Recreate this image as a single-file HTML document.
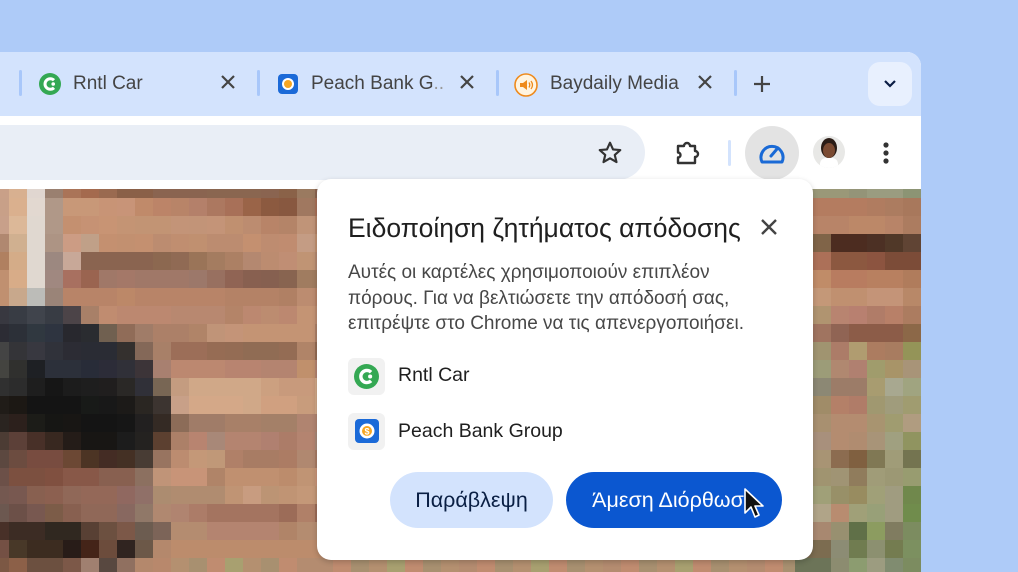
<!DOCTYPE html>
<html><head><meta charset="utf-8">
<style>
*{margin:0;padding:0;box-sizing:border-box}
body{width:1018px;height:572px;overflow:hidden;background:#aecbf8;font-family:"Liberation Sans","DejaVu Sans",sans-serif;position:relative}
.abs{position:absolute}
#win{position:absolute;left:0;top:52px;width:921px;height:520px;background:#fff;border-top-right-radius:14px;overflow:hidden}
#tabs{position:absolute;left:0;top:0;width:921px;height:64px;background:#d3e3fd}
.sep{position:absolute;width:3px;height:26px;top:18px;background:#a8c7fa;border-radius:2px}
.tt{position:absolute;top:20px;font-size:19px;color:#444;line-height:24px}
.x{position:absolute;top:23px}
#bg{position:absolute;left:0;top:137px;width:921px;height:383px;overflow:hidden}
</style></head><body>
<div id="win">
 <div id="bg"></div>
 <div id="tabs">
  <div class="sep" style="left:19px"></div>
  <svg class="abs" style="left:39px;top:21px" width="22" height="22" viewBox="0 0 22 22"><circle cx="11" cy="11" r="11" fill="#34a853"/><path d="M15 7.2A5.3 5.3 0 1 0 15 14.8" stroke="#fff" stroke-width="3" fill="none"/><circle cx="14.2" cy="11" r="1.8" fill="#fff"/></svg>
  <div class="tt" style="left:73px">Rntl Car</div>
  <svg class="x" style="left:221px" width="14" height="14"><path d="M1 1L13 13M13 1L1 13" stroke="#444" stroke-width="2.2"/></svg>
  <div class="sep" style="left:257px"></div>
  <svg class="abs" style="left:278px;top:22px" width="20" height="20"><rect width="20" height="20" rx="4" fill="#1b6ad8"/><circle cx="10" cy="10" r="6" fill="#fff"/><circle cx="10" cy="10" r="4" fill="#f6a623"/></svg>
  <div class="tt" style="left:311px">Peach Bank G<span style="color:#999">..</span></div>
  <svg class="x" style="left:460px" width="14" height="14"><path d="M1 1L13 13M13 1L1 13" stroke="#444" stroke-width="2.2"/></svg>
  <div class="sep" style="left:496px"></div>
  <svg class="abs" style="left:514px;top:21px" width="24" height="24"><circle cx="12" cy="12" r="11" fill="#fff4e0" stroke="#ee8a1c" stroke-width="1.6"/><path d="M6 10h3l4-3v10l-4-3H6z" fill="#ee8a1c"/><path d="M15 9.5q1.5 2.5 0 5M17 8q3 4 0 8" stroke="#ee8a1c" stroke-width="1.3" fill="none"/></svg>
  <div class="tt" style="left:550px">Baydaily Media</div>
  <svg class="x" style="left:698px" width="14" height="14"><path d="M1 1L13 13M13 1L1 13" stroke="#444" stroke-width="2.2"/></svg>
  <div class="sep" style="left:734px"></div>
  <svg class="abs" style="left:754px;top:24px" width="16" height="16"><path d="M8 0V16M0 8H16" stroke="#444" stroke-width="2.2"/></svg>
  <div class="abs" style="left:868px;top:10px;width:44px;height:44px;border-radius:12px;background:#e8f0fe"></div>
  <svg class="abs" style="left:884px;top:28px" width="12" height="8"><path d="M1 1L6 6L11 1" stroke="#0b1d44" stroke-width="2.2" fill="none"/></svg>
 </div>
 <div class="abs" style="left:0;top:73px;width:645px;height:55px;background:#e9eef6;border-radius:0 28px 28px 0"></div>
 <svg class="abs" style="left:597px;top:88px" width="26" height="26" viewBox="0 0 24 24"><path d="M12 2.5l2.8 6.2 6.7.6-5.1 4.5 1.6 6.6L12 16.9l-6 3.5 1.6-6.6-5.1-4.5 6.7-.6z" fill="none" stroke="#333" stroke-width="2" stroke-linejoin="round"/></svg>
 <svg class="abs" style="left:674px;top:87px" width="28" height="28" viewBox="0 0 28 28"><path d="M4 7h6a3 3 0 0 1 6 0h5v5a3 3 0 0 1 0 6v6H4v-5.5a2.5 2.5 0 0 0 0-5z" fill="none" stroke="#333" stroke-width="2.4" stroke-linejoin="round"/></svg>
 <div class="abs" style="left:728px;top:88px;width:3px;height:26px;background:#d3e3fd;border-radius:2px"></div>
 <div class="abs" style="left:745px;top:74px;width:54px;height:54px;border-radius:50%;background:#e3e3e3"></div>
 <svg class="abs" style="left:757px;top:89px" width="30" height="24" viewBox="0 0 30 24"><path d="M5 21A11 11 0 1 1 25 21Z" fill="none" stroke="#1a6ad6" stroke-width="3" stroke-linejoin="round"/><path d="M14 15L20 8" stroke="#1a6ad6" stroke-width="3" stroke-linecap="round"/></svg>
 <div class="abs" style="left:813px;top:84px;width:32px;height:32px;border-radius:50%;background:#e8e8e6;overflow:hidden">
  <div class="abs" style="left:8px;top:2px;width:16px;height:20px;border-radius:50%;background:#2a1c16"></div>
  <div class="abs" style="left:10px;top:7px;width:12px;height:15px;border-radius:50%;background:#7a4a32"></div>
  <div class="abs" style="left:7px;top:22px;width:18px;height:12px;border-radius:6px 6px 0 0;background:#fff"></div>
 </div>
 <svg class="abs" style="left:882px;top:89px" width="8" height="24"><circle cx="4" cy="4" r="2.6" fill="#333"/><circle cx="4" cy="12" r="2.6" fill="#333"/><circle cx="4" cy="20" r="2.6" fill="#333"/></svg>
</div>

<div class="abs" style="left:317px;top:179px;width:496px;height:381px;background:#fff;border-radius:14px;box-shadow:0 2px 6px rgba(0,0,0,.2)">
 <div class="abs" style="left:31px;top:33px;font-size:26.5px;line-height:32px;color:#1f1f1f;white-space:nowrap">Ειδοποίηση ζητήματος απόδοσης</div>
 <svg class="abs" style="left:444px;top:40px" width="16" height="16"><path d="M1 1L15 15M15 1L1 15" stroke="#444" stroke-width="2.4"/></svg>
 <div class="abs" style="left:31px;top:81px;font-size:19px;line-height:25.5px;color:#474747;white-space:nowrap">Αυτές οι καρτέλες χρησιμοποιούν επιπλέον<br>πόρους. Για να βελτιώσετε την απόδοσή σας,<br>επιτρέψτε στο Chrome να τις απενεργοποιήσει.</div>
 <div class="abs" style="left:31px;top:179px;width:37px;height:37px;border-radius:6px;background:#f1f1f1"></div>
 <svg class="abs" style="left:37px;top:185px" width="25" height="25" viewBox="0 0 22 22"><circle cx="11" cy="11" r="11" fill="#34a853"/><path d="M15 7.2A5.3 5.3 0 1 0 15 14.8" stroke="#fff" stroke-width="3" fill="none"/><circle cx="14.2" cy="11" r="1.8" fill="#fff"/></svg>
 <div class="abs" style="left:81px;top:185px;font-size:19.5px;color:#1f1f1f">Rntl Car</div>
 <div class="abs" style="left:31px;top:234px;width:37px;height:37px;border-radius:6px;background:#f1f1f1"></div>
 <svg class="abs" style="left:38px;top:240px" width="24" height="24"><rect width="24" height="24" rx="4" fill="#1b6ad8"/><circle cx="12" cy="12" r="7.5" fill="#fff"/><circle cx="12" cy="12" r="5" fill="#f6a623"/><text x="12" y="15.5" font-size="9" text-anchor="middle" fill="#fff" font-family="Liberation Sans" font-weight="bold">$</text></svg>
 <div class="abs" style="left:81px;top:241px;font-size:19.5px;color:#1f1f1f">Peach Bank Group</div>
 <div class="abs" style="left:73px;top:293px;width:163px;height:56px;border-radius:28px;background:#d3e3fd;color:#0a1f44;font-size:21.5px;line-height:56px;text-align:center">Παράβλεψη</div>
 <div class="abs" style="left:249px;top:293px;width:216px;height:56px;border-radius:28px;background:#0b57d0;color:#fff;font-size:21.5px;line-height:56px;text-align:center">Άμεση Διόρθωση</div>
 <svg class="abs" style="left:426px;top:308px" width="22" height="34" viewBox="0 0 22 34"><path d="M2 2V26L8 20L12 30L16 28L12 19H20Z" fill="#111" stroke="#fff" stroke-width="1.6" stroke-linejoin="round"/></svg>
</div>

<script>
var L=[
"c9a088 d8b090 e0d6d0 9a8070 aa7458 a46a4e 9a6a50 8a6048 8a6048 8a6450 8a6450 8a6450 8a6650 8a6650 8a6650 8a6450 8a6248 9a7a60",
"c8a088 dab08e e2d8d0 b09888 c89878 c89878 c89476 c89478 c08a6a bc8468 b88468 b4806a ac7860 a87058 9a6448 8c5a40 885840 a07860",
"c8a08a dcb898 e0d8d0 b09888 c49070 c69274 c89474 c49474 c29474 c29474 c39478 c29478 c49478 c09070 bc8c70 b88468 b48468 c09478",
"b08870 d0b090 e0d8d0 ad9484 cc9c84 c0a088 c49070 c29070 c49070 bc8c70 c08e70 c09070 bc8c70 bc8c70 c49070 be8c70 c08c70 c49c84",
"b08060 d4ac88 e0d8d0 9c8880 c8a898 8a6450 8a6450 8a6450 8a6450 8c6850 906a54 9a7458 a47c60 ac8064 b48870 bc8c70 c08e74 c09474",
"c09070 d8ac88 e0d8d0 a08880 a87060 9a6450 a07868 a47868 a07868 a07868 a07868 9c786a 987060 906454 886050 866050 886450 a07c60",
"c09070 c8a88c bcbcb8 9a8478 b88468 b88468 b88468 bc8868 b88468 b88468 b88468 b88468 b88468 b48266 b48266 b48266 b08064 bc8c70",
"383840 383c44 40444c 383c44 4c4448 a88068 c08c70 bc8870 bc8870 bc8870 b88870 b88870 b88870 b48468 bc8870 bc8c70 bc8870 c49474",
"2c2c34 2c3038 303840 2e3440 28282e 2a2c30 706050 906c58 a07c68 ac8068 ac8068 b08468 c09478 c49478 c49474 c49474 c49474 c49474",
"444444 343438 383840 30323a 2c2c34 2a2c34 2a2c34 34302e 846858 a88068 9c6e58 9c6e58 966c54 946c54 906c54 906c54 946c54 b08468",
"444440 30302e 1e2024 2c303a 2c303a 282c38 2c2c38 303038 3c3438 a88070 bc8870 bc8870 bc8870 b88470 b88470 b48470 b48470 c0906c",
"303030 2c2c2c 1e1e1e 161616 1c1c1c 1e1e1e 201e1e 2a2826 303038 786654 c49c80 d0a888 d0a888 d0a888 d0a888 cca080 c89a7c c89a7c",
"201c18 1c1814 141414 141414 141414 181a18 181818 1c1a18 2a2622 3c3430 c8a088 d4a888 d4a888 d4a888 d0a888 d0a080 d0a080 c89c7c",
"2a2420 2c201c 1c1c18 161614 181614 141414 141414 161616 222020 342a24 8c6c58 a07c68 a07c68 a88068 a88068 a48068 a48068 b08470",
"4c3c34 5c4038 483028 382820 241c18 181614 181614 1c1c1c 242220 5c4030 ac8068 b88470 a88878 b48470 b48470 b08070 ac7c68 b48470",
"5c4840 6c4c40 784c40 784c40 6c4834 4c3424 442c24 443024 483c34 987460 bc8c70 c49878 c09878 b08068 a87c64 a87c64 ac7c64 b08870",
"6c5048 7c5040 7c5040 805040 885848 885848 886050 886050 8c7060 c09478 c89478 c89478 b08468 c09070 c09070 c09070 bc8c6c c09474",
"745850 785850 886050 8c6050 906858 946858 946858 906860 907068 ac8c70 b08c70 b08c70 b08c70 c09474 c89c80 bc9474 c09474 c49878",
"6c5850 6c5048 785850 7c5c48 886050 906858 906858 886860 907868 b08870 b08470 ac7c68 a47460 a47460 a47460 a47460 9c6c58 b08068",
"483028 3c2c24 3c2c24 302820 302820 584034 6c5040 7c5848 6c5c50 7c6458 b48c70 b48c70 b48470 b48470 b48470 b48470 b08468 b48c70",
"745044 483828 3c2c20 3c2c20 281c18 442418 6c4c3c 302420 6c5848 b4886c bc8c6c bc8c6c bc8c6c bc8c6c bc8c6c bc8c6c bc8c6c bc8c6c",
"7c5844 8c6048 6c5040 6c5040 7c5848 a08070 584840 907060 b4886c b8886c b49070 a89070 c08c70 a8a070 b49070 a89070 c08c70 b48c70"];
var R=[
"9a9878 9a9878 949478 9a9c80 9a9c80 8c9474","b47c60 b47c60 b47c60 b07c60 ac7c60 a8785c","b88468 b88468 bc8868 bc8868 b88468 ac7c60",
"806448 4c2c20 4c2c20 4c3024 503828 604434","ac7058 8c5840 8c5840 8c5440 7c4c38 7c4c38","c08c68 b87c60 b87c60 b88060 b88060 b07c5c",
"c49878 c09070 c09070 c49478 c49478 b88868","b09470 b88470 b88070 b07c68 b88068 ac7c60","a07460 906454 8c5c48 8c5c48 8c5c48 8c6848",
"a09470 ac7c68 b09c70 ac7c60 a87c60 949458","9c9c78 b08870 b08070 a09c6c a89468 a89478","8c8874 9c7c68 9c7c68 a89c70 a8a890 a0a480",
"a08c68 b48068 b07c68 a09870 a09c7c a09c70","a89070 b48c70 b48c70 a89470 a09c70 b09c80","a8907c b48c70 b08c70 a89478 a0a080 909460",
"a89474 8c6c50 806040 807854 a09c78 747450","a09470 a09474 907c5c a09c78 9c9874 989c70","a0a078 989068 988c60 a0a078 a09c80 70884c",
"b0a488 b88c70 a0a078 98a078 a09c80 708c4c","a88870 989070 607048 8c9c60 807c60 7c8c60","7c6c50 8c8c74 707c50 8c9070 747c50 7c9060",
"6c7458 8c8c70 8c9c70 9c9c80 808c70 7c8c60"];
(function(){
var bg=document.getElementById('bg'),h='';
function rt(r){return r==0?0:9+(r-1)*18;}
function rh(r){return r==0?9:18;}
for(var r=0;r<22;r++){
 var c=L[r].split(' ');
 for(var i=0;i<c.length;i++){var x=i==0?0:9+(i-1)*18,w=i==0?9:18;h+='<div style="position:absolute;left:'+x+'px;top:'+rt(r)+'px;width:'+w+'px;height:'+rh(r)+'px;background:#'+c[i]+'"></div>';}
 for(var k=0;k<28;k++){var cc=c[10+((k*7+r*3)%8)];h+='<div style="position:absolute;left:'+(315+k*18)+'px;top:'+rt(r)+'px;width:18px;height:'+rh(r)+'px;background:#'+cc+'"></div>';}
 var d=R[r].split(' ');
 h+='<div style="position:absolute;left:795px;top:'+rt(r)+'px;width:18px;height:'+rh(r)+'px;background:#'+d[0]+'"></div>';
 for(var j=0;j<6;j++){h+='<div style="position:absolute;left:'+(813+j*18)+'px;top:'+rt(r)+'px;width:18px;height:'+rh(r)+'px;background:#'+d[j]+'"></div>';}
}
bg.innerHTML=h;
})();
</script>
</body></html>
